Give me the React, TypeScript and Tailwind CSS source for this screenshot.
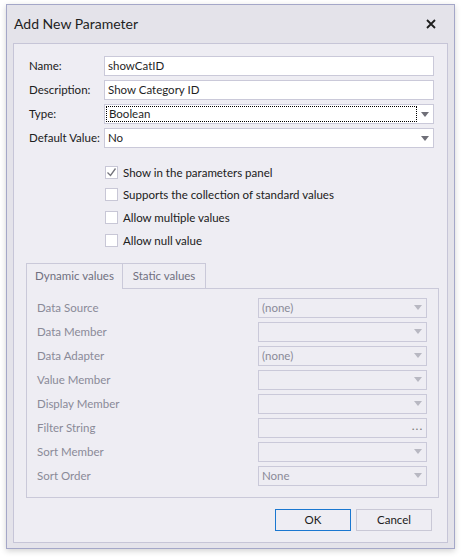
import React from "react";

const FONT = { fontFamily: 'Lato, "Open Sans", sans-serif' };

function Arrow({ muted }: { muted?: boolean }) {
  return (
    <svg width="8" height="5" viewBox="0 0 8 5" aria-hidden>
      <path d="M0 0h8L4 5z" fill={muted ? "#b8b8c2" : "#6f6f78"} />
    </svg>
  );
}

function TextField({ value }: { value: string }) {
  return (
    <div className="h-[20px] flex-1 border border-[#cac9d9] bg-white flex items-center px-[3px] text-[11.5px] text-[#1f1f1f]">
      {value}
    </div>
  );
}

function Combo({ value, focused }: { value: string; focused?: boolean }) {
  return (
    <div className="h-[20px] flex-1 border border-[#cac9d9] bg-white flex items-center text-[11.5px] text-[#1f1f1f]">
      <div
        className={
          "flex-1 h-[16px] ml-[1px] flex items-center px-[2px] " +
          (focused ? "border border-dotted border-black" : "")
        }
      >
        {value}
      </div>
      <div className="w-[16px] flex justify-center">
        <Arrow />
      </div>
    </div>
  );
}

function Check({ label, checked }: { label: string; checked?: boolean }) {
  return (
    <div className="h-[22.67px] flex items-center gap-[5px]">
      <div className="w-[13px] h-[13px] border border-[#c8c7d6] bg-white flex items-center justify-center">
        {checked && (
          <svg width="11" height="11" viewBox="0 0 11 11" aria-hidden>
            <path d="M1.5 5.5l3 3 5-7" fill="none" stroke="#74747c" strokeWidth="1.3" />
          </svg>
        )}
      </div>
      <span className="text-[11.5px] text-[#202020] whitespace-nowrap">{label}</span>
    </div>
  );
}

const DYNAMIC = [
  { label: "Data Source", value: "(none)", kind: "combo" },
  { label: "Data Member", value: "", kind: "combo" },
  { label: "Data Adapter", value: "(none)", kind: "combo" },
  { label: "Value Member", value: "", kind: "combo" },
  { label: "Display Member", value: "", kind: "combo" },
  { label: "Filter String", value: "", kind: "dots" },
  { label: "Sort Member", value: "", kind: "combo" },
  { label: "Sort Order", value: "None", kind: "combo" },
];

export default function App() {
  return (
    <div className="w-[461px] h-[557px] bg-white pt-[4px] pl-[6px] leading-none" style={FONT}>
      <div className="w-[449px] h-[545px] border border-[#a4a7c8] bg-[#e4e3ea] flex flex-col shadow-[0_2px_6px_rgba(0,0,0,0.18)]">
        <div className="h-[38px] shrink-0 flex items-center justify-between pl-[7px] pr-[18px]">
          <span className="text-[14px] text-[#1e1e1e]">Add New Parameter</span>
          <svg width="10" height="10" viewBox="0 0 10 10" aria-hidden>
            <path d="M1 1l8 8M9 1l-8 8" stroke="#1e1e1e" strokeWidth="1.8" />
          </svg>
        </div>
        <div className="mx-[6px] h-[500px] border border-[#c6c5d7] bg-[#eeedf3] pt-[12px] pl-[15px] pr-[13px]">
          <div className="flex flex-col gap-[4px]">
            <div className="flex items-center">
              <span className="w-[75px] text-[11.5px] text-[#202020] whitespace-nowrap">Name:</span>
              <TextField value="showCatID" />
            </div>
            <div className="flex items-center">
              <span className="w-[75px] text-[11.5px] text-[#202020] whitespace-nowrap">Description:</span>
              <TextField value="Show Category ID" />
            </div>
            <div className="flex items-center">
              <span className="w-[75px] text-[11.5px] text-[#202020] whitespace-nowrap">Type:</span>
              <Combo value="Boolean" focused />
            </div>
            <div className="flex items-center">
              <span className="w-[75px] text-[11.5px] text-[#202020] whitespace-nowrap">Default Value:</span>
              <Combo value="No" />
            </div>
          </div>

          <div className="mt-[13px] ml-[76px] flex flex-col">
            <Check label="Show in the parameters panel" checked />
            <Check label="Supports the collection of standard values" />
            <Check label="Allow multiple values" />
            <Check label="Allow null value" />
          </div>

          <div className="mt-[11px] ml-[-3px] w-[413px]">
            <div className="flex h-[26px]">
              <div className="w-[97px] border border-b-0 border-[#cac9d9] flex items-center justify-center text-[11.5px] text-[#707080]">
                Dynamic values
              </div>
              <div className="w-[83px] border border-l-0 border-[#cac9d9] flex items-center justify-center text-[11.5px] text-[#707080]">
                Static values
              </div>
              <div className="flex-1 border-b border-[#cac9d9]" />
            </div>
            <div className="h-[209px] border border-t-0 border-[#cac9d9] pt-[9px] pl-[10px] pr-[11px] flex flex-col gap-[4px]">
              {DYNAMIC.map((r) => (
                <div key={r.label} className="flex items-center h-[20px]">
                  <span className="w-[221px] text-[11.5px] text-[#8a8a98]">{r.label}</span>
                  <div className="h-[20px] flex-1 border border-[#cac9d9] flex items-center text-[11.5px] text-[#8a8a98]">
                    <span className="flex-1 px-[3px]">{r.value}</span>
                    <div className="w-[17px] flex justify-center">
                      {r.kind === "dots" ? (
                        <span className="text-[#777] text-[12px] leading-none tracking-[1px] -mt-[4px]">...</span>
                      ) : (
                        <Arrow muted />
                      )}
                    </div>
                  </div>
                </div>
              ))}
            </div>
          </div>

          <div className="mt-[11px] flex justify-end gap-[5px] pr-[2px]">
            <button className="w-[76px] h-[22px] border border-[#1a77d0] bg-[#eeedf3] text-[11.5px] text-[#202020]">
              OK
            </button>
            <button className="w-[76px] h-[22px] border border-[#c9c8d6] bg-[#eeedf3] text-[11.5px] text-[#202020]">
              Cancel
            </button>
          </div>
        </div>
      </div>
    </div>
  );
}
